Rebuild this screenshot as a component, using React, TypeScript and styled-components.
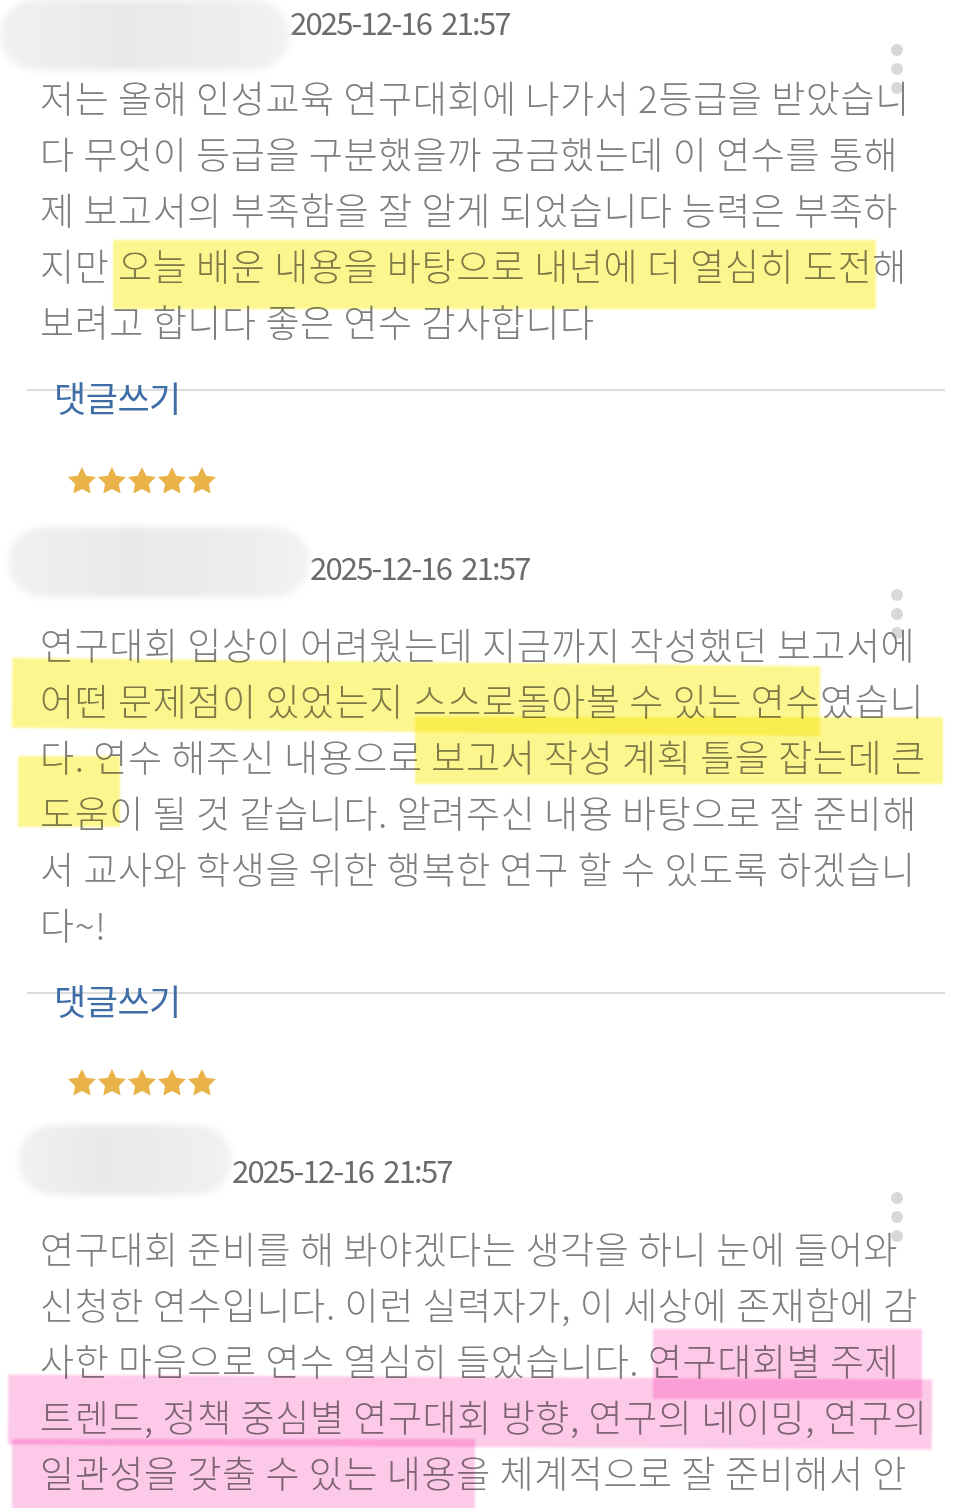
import styled, { createGlobalStyle } from 'styled-components';

const GlobalStyle = createGlobalStyle`
  html, body {
    margin: 0;
    padding: 0;
    background: #ffffff;
  }
  body {
    font-family: "Noto Sans CJK KR", "Noto Sans", sans-serif;
    overflow: hidden;
  }
`;

interface Mark {
  x: number;
  y: number;
  w: number;
  h: number;
  tone: 'yellow' | 'pink';
  tilt?: number;
}

interface ReviewData {
  stars: boolean;
  starTop: number;
  starBottom: number;
  pillWidth: number;
  pillLeft: number;
  dateTop: number;
  headerGap: number;
  lines: string[];
  marks: Mark[];
  comment: boolean;
}

const reviews: ReviewData[] = [
  {
    stars: false,
    starTop: 0,
    starBottom: 0,
    pillWidth: 290,
    pillLeft: 0,
    dateTop: 22,
    headerGap: -3,
    lines: [
      '저는 올해 인성교육 연구대회에 나가서 2등급을 받았습니',
      '다 무엇이 등급을 구분했을까 궁금했는데 이 연수를 통해',
      '제 보고서의 부족함을 잘 알게 되었습니다 능력은 부족하',
      '지만 오늘 배운 내용을 바탕으로 내년에 더 열심히 도전해',
      '보려고 합니다 좋은 연수 감사합니다',
    ],
    marks: [{ x: 113, y: 171, w: 763, h: 69, tone: 'yellow' }],
    comment: true,
  },
  {
    stars: true,
    starTop: 47,
    starBottom: 30,
    pillWidth: 302,
    pillLeft: 8,
    dateTop: 40,
    headerGap: 17,
    lines: [
      '연구대회 입상이 어려웠는데 지금까지 작성했던 보고서에',
      '어떤 문제점이 있었는지 스스로돌아볼 수 있는 연수였습니',
      '다. 연수 해주신 내용으로 보고서 작성 계획 틀을 잡는데 큰',
      '도움이 될 것 같습니다. 알려주신 내용 바탕으로 잘 준비해',
      '서 교사와 학생을 위한 행복한 연구 할 수 있도록 하겠습니',
      '다~!',
    ],
    marks: [
      { x: 12, y: 46, w: 808, h: 70, tone: 'yellow', tilt: 0.6 },
      { x: 415, y: 101, w: 528, h: 67, tone: 'yellow' },
      { x: 18, y: 140, w: 102, h: 71, tone: 'yellow' },
    ],
    comment: true,
  },
  {
    stars: true,
    starTop: 46,
    starBottom: 26,
    pillWidth: 214,
    pillLeft: 18,
    dateTop: 45,
    headerGap: 23,
    lines: [
      '연구대회 준비를 해 봐야겠다는 생각을 하니 눈에 들어와',
      '신청한 연수입니다. 이런 실력자가, 이 세상에 존재함에 감',
      '사한 마음으로 연수 열심히 들었습니다. 연구대회별 주제',
      '트렌드, 정책 중심별 연구대회 방향, 연구의 네이밍, 연구의',
      '일관성을 갖출 수 있는 내용을 체계적으로 잘 준비해서 안',
    ],
    marks: [
      { x: 653, y: 109, w: 269, h: 70, tone: 'pink' },
      { x: 8, y: 157, w: 924, h: 70, tone: 'pink', tilt: 0.3 },
      { x: 12, y: 219, w: 463, h: 72, tone: 'pink' },
    ],
    comment: false,
  },
];

const Page = styled.div`
  width: 972px;
  height: 1508px;
  overflow: hidden;
  background: #ffffff;
`;

const ReviewBlock = styled.section`
  display: flex;
  flex-direction: column;
`;

const StarRow = styled.div<{ $top: number; $bottom: number }>`
  display: flex;
  padding-left: 66px;
  margin-top: ${(p) => p.$top}px;
  margin-bottom: ${(p) => p.$bottom}px;
  height: 32px;
`;

const Header = styled.header<{ $gap: number }>`
  position: relative;
  display: flex;
  align-items: flex-start;
  height: 72px;
  margin-bottom: ${(p) => p.$gap}px;
`;

const NamePill = styled.div<{ $w: number; $left: number }>`
  width: ${(p) => p.$w}px;
  height: 70px;
  margin-left: ${(p) => p.$left}px;
  flex-shrink: 0;
  border-radius: 35px;
  background: linear-gradient(90deg, #f1f1f1 0%, #e9e9e9 40%, #ececec 70%, #f2f2f2 100%);
  filter: blur(3px);
`;

const DateText = styled.span<{ $top: number }>`
  margin-top: ${(p) => p.$top - 21}px;
  font-size: 31px;
  line-height: 42px;
  letter-spacing: -1.8px;
  word-spacing: 5px;
  color: #6b6b6b;
  white-space: nowrap;
`;

const Kebab = styled.div<{ $top: number }>`
  position: absolute;
  left: 891px;
  top: ${(p) => p.$top}px;
  display: flex;
  flex-direction: column;
  gap: 7px;
`;

const Dot = styled.span`
  width: 12px;
  height: 12px;
  border-radius: 50%;
  background: #d8d8d8;
  filter: blur(0.7px);
`;

const Body = styled.div`
  position: relative;
  padding-left: 40px;
`;

const Line = styled.p`
  margin: 0;
  font-size: 37px;
  font-weight: 300;
  line-height: 56px;
  letter-spacing: 0.6px;
  color: #7e7e7e;
  white-space: nowrap;
`;

const Highlight = styled.span<{ $x: number; $y: number; $w: number; $h: number; $tone: 'yellow' | 'pink'; $tilt: number }>`
  position: absolute;
  left: ${(p) => p.$x}px;
  top: ${(p) => p.$y}px;
  width: ${(p) => p.$w}px;
  height: ${(p) => p.$h}px;
  transform: rotate(${(p) => p.$tilt}deg);
  background: ${(p) => (p.$tone === 'yellow' ? 'rgba(250, 238, 40, 0.52)' : 'rgba(250, 120, 200, 0.4)')};
  mix-blend-mode: multiply;
  filter: blur(1px);
  pointer-events: none;
`;

const CommentRow = styled.div`
  display: flex;
  flex-direction: column;
  margin-top: 40px;
`;

const Divider = styled.div`
  margin-left: 27px;
  width: 918px;
  height: 2px;
  background: #dcdcdc;
`;

const CommentLink = styled.a`
  margin-top: -15px;
  margin-left: 54px;
  font-size: 35px;
  line-height: 42px;
  color: #3f6ea7;
  text-decoration: none;
  letter-spacing: -0.5px;
`;

const Stars = ({ top, bottom }: { top: number; bottom: number }) => (
  <StarRow $top={top} $bottom={bottom}>
    <svg width="152" height="32" viewBox="0 0 152 32">
      {[0, 1, 2, 3, 4].map((i) => (
        <path
          key={i}
          transform={`translate(${i * 30} 0) scale(1.33)`}
          d="M12 1.5l3.2 6.6 7.3 1-5.3 5.1 1.3 7.3L12 18l-6.5 3.5 1.3-7.3L1.5 9.1l7.3-1z"
          fill="#e9b34a"
        />
      ))}
    </svg>
  </StarRow>
);

const Review = ({ data }: { data: ReviewData }) => (
  <ReviewBlock>
    {data.stars && <Stars top={data.starTop} bottom={data.starBottom} />}
    <Header $gap={data.headerGap}>
      <NamePill $w={data.pillWidth} $left={data.pillLeft} />
      <DateText $top={data.dateTop}>2025-12-16 21:57</DateText>
      <Kebab $top={data.dateTop + 22}>
        <Dot />
        <Dot />
        <Dot />
      </Kebab>
    </Header>
    <Body>
      {data.lines.map((l) => (
        <Line key={l}>{l}</Line>
      ))}
      {data.marks.map((m, i) => (
        <Highlight key={i} $x={m.x} $y={m.y} $w={m.w} $h={m.h} $tone={m.tone} $tilt={m.tilt ?? 0} />
      ))}
    </Body>
    {data.comment && (
      <CommentRow>
        <Divider />
        <CommentLink>댓글쓰기</CommentLink>
      </CommentRow>
    )}
  </ReviewBlock>
);

export default function App() {
  return (
    <Page>
      <GlobalStyle />
      {reviews.map((r, i) => (
        <Review key={i} data={r} />
      ))}
    </Page>
  );
}
